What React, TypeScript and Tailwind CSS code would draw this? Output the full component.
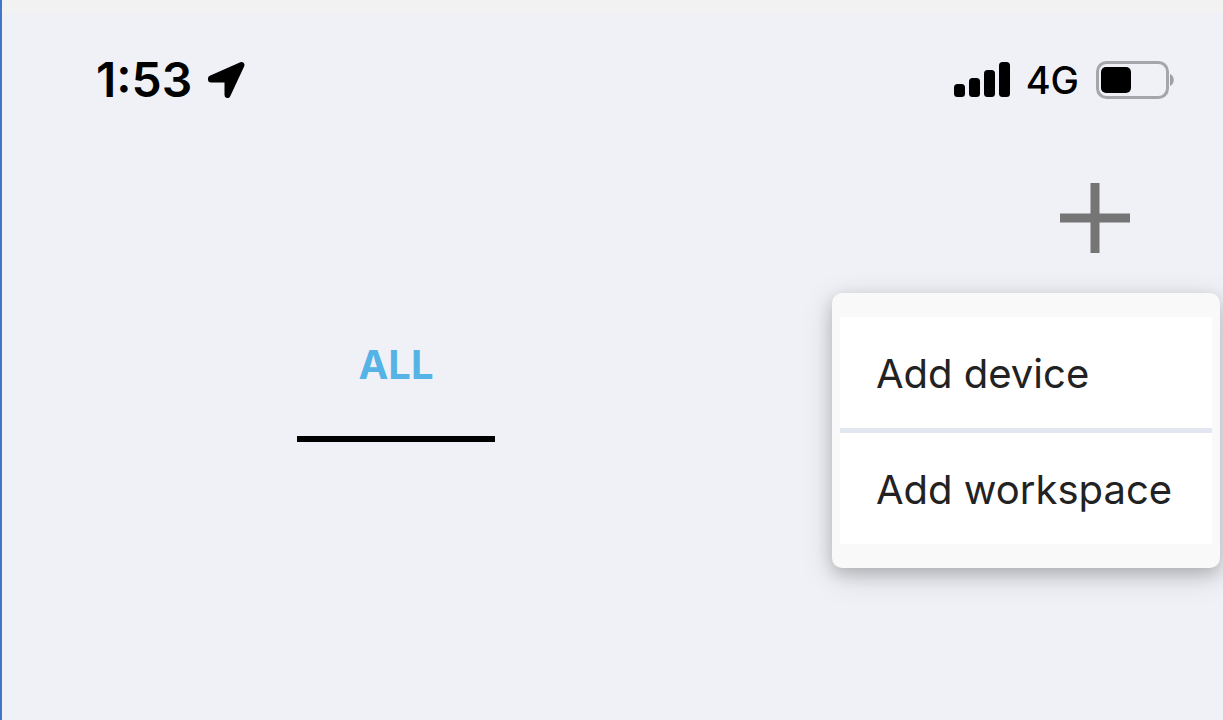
import { useState } from "react";

const MENU_ITEMS = ["Add device", "Add workspace"];

function LocationArrow() {
  return (
    <svg viewBox="0 0 38 38" className="w-[38px] h-[38px]" aria-hidden="true">
      <path
        d="M3 17.5 L33.5 4 L19.5 34 V18.5 H3 Z"
        fill="#000"
        stroke="#000"
        strokeWidth="6"
        strokeLinejoin="round"
      />
    </svg>
  );
}

function SignalBars() {
  return (
    <svg viewBox="0 0 56 36" className="w-14 h-9" aria-hidden="true">
      <rect x="0" y="22" width="11" height="13" rx="3.5" />
      <rect x="15" y="16" width="11" height="19" rx="3.5" />
      <rect x="30" y="8" width="11" height="27" rx="3.5" />
      <rect x="45" y="0" width="11" height="35" rx="3.5" />
    </svg>
  );
}

function Battery() {
  return (
    <svg viewBox="0 0 80 38" className="w-20 h-[38px]" aria-hidden="true">
      <rect x="2.5" y="1.5" width="70" height="35" rx="9" fill="none" stroke="#a6a6aa" strokeWidth="3" />
      <rect x="6" y="6" width="30" height="26" rx="5" />
      <path d="M75 13 C80 15 80 23 75 25 Z" fill="#a0a0a4" />
    </svg>
  );
}

function StatusBar() {
  return (
    <div className="h-[134px] pl-[94px] pr-12 flex items-center justify-between text-black">
      <div className="flex items-center gap-4">
        <span className="text-[48px] leading-[48px] font-semibold">1:53</span>
        <LocationArrow />
      </div>
      <div className="flex items-center gap-4">
        <SignalBars />
        <span className="text-[38px] leading-[48px] font-medium">4G</span>
        <Battery />
      </div>
    </div>
  );
}

export default function App() {
  const [open, setOpen] = useState(true);

  return (
    <div className="min-h-screen flex flex-col overflow-hidden border-l-2 border-[#4376c6] bg-[#f0f1f6] font-['Inter',sans-serif]">
      <div className="h-[13px] bg-[#f2f2f2]" />
      <StatusBar />

      <header className="relative z-10 h-[142px] pr-[93px] flex items-center justify-end">
        <button type="button" aria-label="Add" aria-expanded={open} onClick={() => setOpen(!open)}>
          <svg viewBox="0 0 70 70" className="w-[70px] h-[70px]" aria-hidden="true">
            <path d="M35 0 V70 M0 35 H70" stroke="#757575" strokeWidth="9" />
          </svg>
        </button>

        {open && (
          <div className="absolute top-full right-[3px] mt-1 min-w-[388px] px-2 py-6 rounded-[10px] bg-[#f9f9f9] shadow-[0_8px_32px_rgba(0,0,0,0.15),0_6px_16px_rgba(0,0,0,0.18)]">
            <ul className="bg-white divide-y-[5px] divide-[#e2e6f0]">
              {MENU_ITEMS.map((label) => (
                <li key={label}>
                  <button
                    type="button"
                    className="w-full px-9 pt-[33px] pb-[30px] text-left text-[40px] leading-[48px] text-[#222] whitespace-nowrap"
                  >
                    {label}
                  </button>
                </li>
              ))}
            </ul>
          </div>
        )}
      </header>

      <nav className="pl-[295px]">
        <button
          type="button"
          className="w-[198px] pt-[52px] pb-[47px] border-b-[6px] border-black text-center text-[40px] leading-[48px] font-bold text-[#56b3e6]"
        >
          ALL
        </button>
      </nav>
    </div>
  );
}
